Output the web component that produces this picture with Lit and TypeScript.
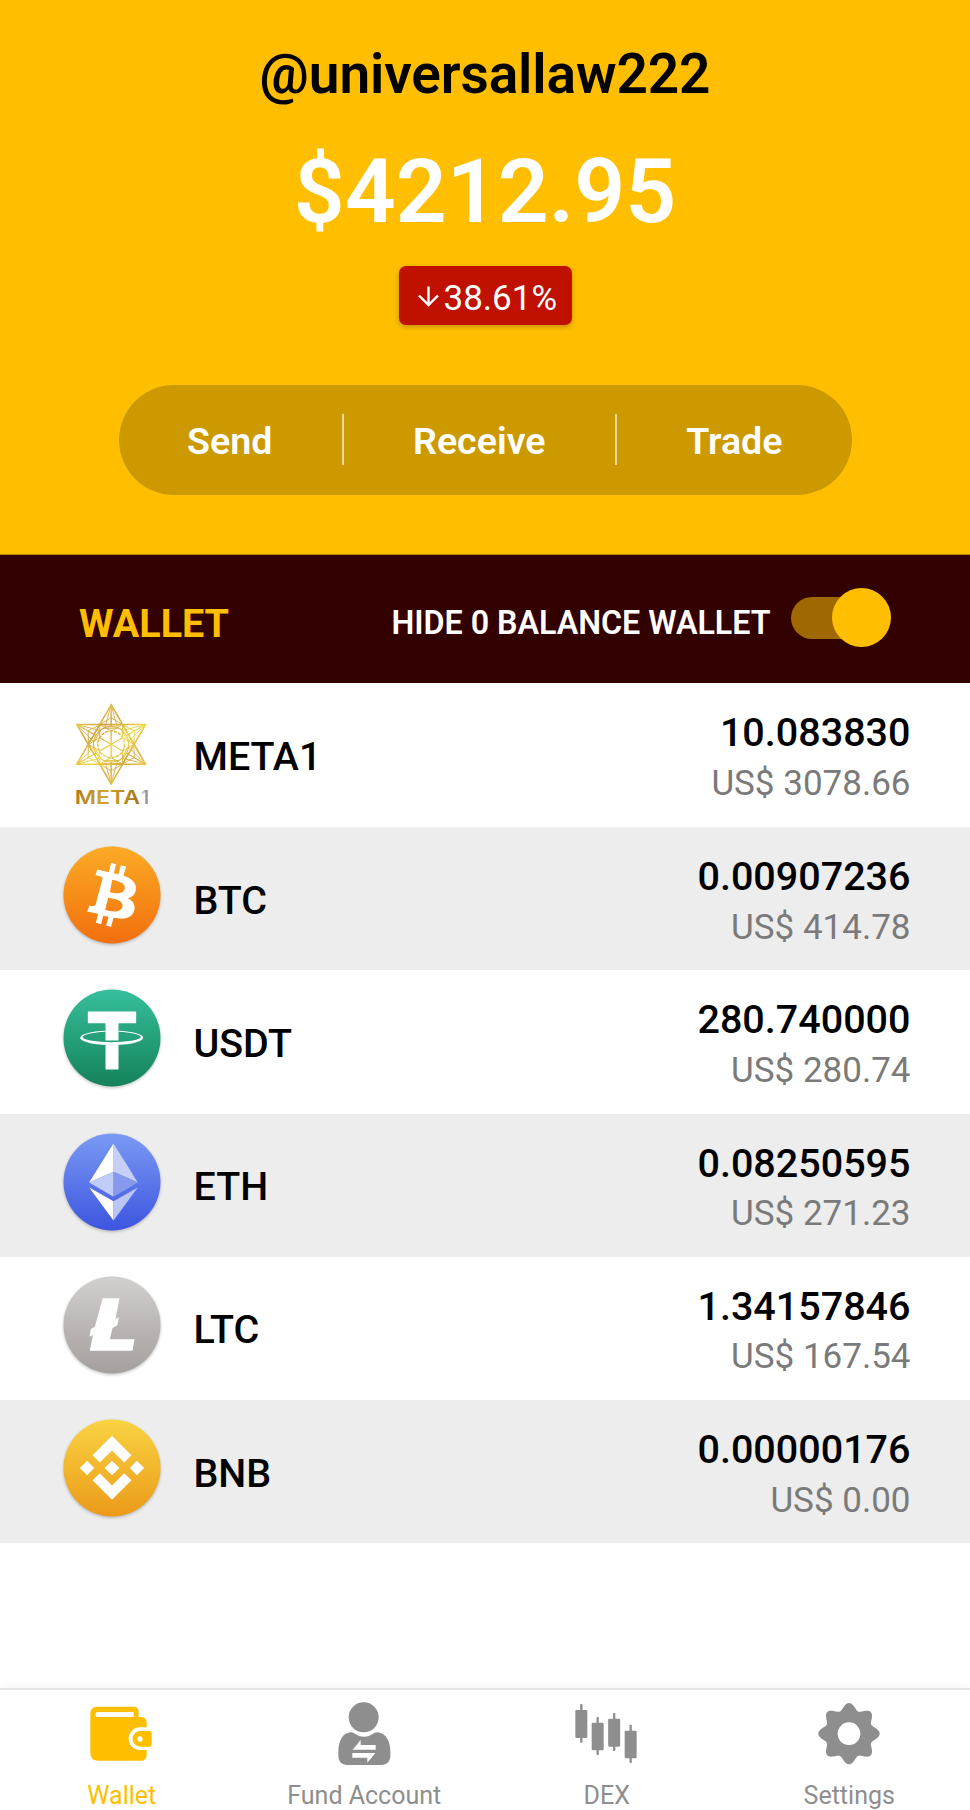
import { LitElement, html, svg, css } from "lit";
import { customElement, property, state } from "lit/decorators.js";

type Coin = { id: string; amount: string; usd: string };

const COINS: Coin[] = [
  { id: "META1", amount: "10.083830", usd: "3078.66" },
  { id: "BTC", amount: "0.00907236", usd: "414.78" },
  { id: "USDT", amount: "280.740000", usd: "280.74" },
  { id: "ETH", amount: "0.08250595", usd: "271.23" },
  { id: "LTC", amount: "1.34157846", usd: "167.54" },
  { id: "BNB", amount: "0.00000176", usd: "0.00" },
];

const GRADIENTS: Record<string, [string, string]> = {
  BTC: ["#fbab25", "#f26f0d"],
  USDT: ["#36bf9b", "#14825a"],
  ETH: ["#7b9af4", "#3c55df"],
  LTC: ["#d2d0cf", "#a59e9d"],
  BNB: ["#f9d341", "#ec9a19"],
};

const GLYPHS: Record<string, unknown> = {
  BTC: svg`<g transform="translate(-185.5 -195.5)"><path fill="#fff" fill-rule="evenodd" d="M141 119L176 127L183 99L198 103L191 130L205 133L212 106L228 110L220 138C245 146 260 160 257 180C255 195 245 203 233 205C250 213 257 228 252 243C245 266 222 270 190 264L183 291L168 288L175 261L159 258L153 283L137 279L144 252L111 245L118 227C130 230 135 230 137 222L157 147C158 141 153 139 136 136ZM186 150L179 187C205 193 222 190 224 175C226 160 205 154 186 150ZM174 204L165 240C190 248 213 247 217 230C220 212 195 207 174 204Z"/></g>`,
  USDT: svg`<g transform="translate(-184.5 -624.5)" fill="#fff"><path d="M112 545H257V580H204V632H165V580H112Z"/><path d="M165 644H204V719H165Z"/><path fill-rule="evenodd" d="M89 624A94.500 21.500 0 0 0 278 624A94.500 21.500 0 0 0 204 603V606A88 17 0 0 1 271 622A88 17 0 0 1 96 622A88 17 0 0 1 165 606V603A94.500 21.500 0 0 0 89 624Z"/></g>`,
  ETH: svg`<g transform="translate(-185.5 -214.500)"><path fill="#fff" d="M190 99L117 216L190 184Z"/><path fill="#c6cff6" d="M190 99L263 216L190 184Z"/><path fill="#c2ccf8" d="M190 184L117 216L190 259Z"/><path fill="#8699ed" d="M190 184L263 216L190 259Z"/><path fill="#fff" d="M117 231L190 272V330Z"/><path fill="#bcc6f5" d="M263 231L190 272V330Z"/></g>`,
  LTC: svg`<g transform="translate(-184.5 -645)"><path fill="#fff" d="M157 565H207L195 627L205 622L201 645L186 654L178 688H252L246 722H118L127 675L117 680L121 657L133 650L150 588Z"/></g>`,
  BNB: svg`<g transform="translate(-185.500 -234.500)"><path fill="#fff" d="M185.500 138L244 196L222 218L185.500 182L149 218L127 196ZM127 271L149 250L185.500 287L222 250L244 271L185.500 330ZM89 234.500L111 213L132 234.500L111 256ZM239 234.500L260 213L282 234.500L260 256ZM163 234.500L185.500 213L208 234.500L185.500 256Z"/></g>`,
};

@customElement("coin-icon")
class CoinIcon extends LitElement {
  @property() name = "";

  static styles = css`
    :host { display: block; width: 100px; height: 110px; }
    svg { display: block; overflow: visible; }
    .coin { filter: drop-shadow(0 4px 4px rgba(0, 0, 0, 0.24)); }
    .brand { font-family: Inter, sans-serif; font-weight: 600; font-size: 54px; }
  `;

  private meta() {
    const at = (r: number, deg: number) => {
      const a = (deg * Math.PI) / 180;
      return [r * Math.sin(a), -r * Math.cos(a)] as const;
    };
    const poly = (pts: (readonly [number, number])[]) =>
      "M" + pts.map((p) => p[0].toFixed(1) + " " + p[1].toFixed(1)).join("L") + "Z";
    const tips = [0, 60, 120, 180, 240, 300].map((d) => at(119, d));
    const inner = [30, 90, 150, 210, 270, 330].map((d) => at(68, d));
    let web = "";
    let spokes = "";
    for (let i = 0; i < 6; i++) {
      const t = tips[i];
      const left = inner[(i + 5) % 6];
      const right = inner[i];
      const a = at(52, i * 60 - 22);
      const b = at(52, i * 60 + 22);
      const c = at(80, i * 60);
      web += poly([t, a, b]) + poly([left, c, right]) + poly([left, at(40, i * 60), right]);
      web += poly([t, at(52, i * 60)]);
      spokes += poly([[0, 0], at(38, i * 60)]);
    }
    return svg`
      <defs>
        <linearGradient id="gold" gradientUnits="userSpaceOnUse" x1="-80" y1="-110" x2="70" y2="110">
          <stop offset="0" stop-color="#f0d955"/><stop offset=".3" stop-color="#d3a23c"/>
          <stop offset=".55" stop-color="#f0d846"/><stop offset=".75" stop-color="#d6aa3a"/>
          <stop offset="1" stop-color="#ecd550"/>
        </linearGradient>
        <linearGradient id="word" gradientUnits="userSpaceOnUse" x1="-109" y1="0" x2="85" y2="20">
          <stop offset="0" stop-color="#a8741c"/><stop offset=".5" stop-color="#d2a62e"/>
          <stop offset="1" stop-color="#a97a1e"/>
        </linearGradient>
        <linearGradient id="one" x1="0" y1="0" x2="1" y2="0">
          <stop offset="0" stop-color="#d0d0d0"/><stop offset="1" stop-color="#77777c"/>
        </linearGradient>
      </defs>
      <g fill="none" stroke="url(#gold)" transform="translate(-2.500 -20)">
        <path stroke-width="4.500" d="${poly([tips[0], tips[2], tips[4]])}${poly([tips[1], tips[3], tips[5]])}"/>
        <path stroke-width="2.800" d="${web}"/>
        <path stroke-width="3" d="${spokes}"/>
        <circle r="53" stroke-width="3.500"/><circle r="40" stroke-width="4.500" stroke-dasharray="10 3"/>
      </g>
      <text class="brand" x="-112" y="160" textLength="196" lengthAdjust="spacingAndGlyphs" fill="url(#word)">META</text>
      <text class="brand" x="88" y="160" fill="url(#one)">1</text>`;
  }

  render() {
    if (this.name === "META1") {
      return html`<svg width="100" height="110" viewBox="-150 -150 300 330">${this.meta()}</svg>`;
    }
    const [top, bottom] = GRADIENTS[this.name];
    return html`<svg width="100" height="110" viewBox="-150 -150 300 330">
      <defs>
        <linearGradient id="face" x1="0" y1="0" x2="0" y2="1">
          <stop offset="0" stop-color=${top} /><stop offset="1" stop-color=${bottom} />
        </linearGradient>
      </defs>
      <circle class="coin" r="145.500" fill="url(#face)"/>
      ${GLYPHS[this.name]}
    </svg>`;
  }
}

const gearPath = () => {
  let d = "";
  for (let i = 0; i < 180; i++) {
    const a = (i * Math.PI) / 90;
    const r = 82 + 10 * Math.cos(8 * a);
    d += (i ? "L" : "M") + (896 + r * Math.sin(a)).toFixed(1) + " " + (161 - r * Math.cos(a)).toFixed(1);
  }
  return d + "ZM862 161a34 34 0 1 0 68 0a34 34 0 1 0 -68 0Z";
};

const NAV = [
  {
    label: "Wallet",
    box: "85 60 198 198",
    art: svg`<path fill-rule="evenodd" d="M112 80H222Q237 80 237 95V111H243Q261 111 261 129V142H241A34 34 0 0 0 241 210H261V224Q261 242 243 242H114Q92 242 92 220V102Q92 80 112 80ZM115 96Q107 96 107 103.500Q107 111 115 111H222V96Z"/><path fill-rule="evenodd" d="M242 153H271Q276 153 276 158V195Q276 200 271 200H242A23.500 23.500 0 0 1 242 153ZM233 177a8 8 0 1 0 16 0a8 8 0 1 0 -16 0Z"/>`,
  },
  {
    label: "Fund Account",
    box: "812 60 198 198",
    art: svg`<circle cx="910" cy="112" r="45"/><path fill-rule="evenodd" d="M834 215C834 182 848 158 872 157C878 157 881 159 886 163C901 173 921 173 936 163C941 159 945 157 952 157C977 160 990 184 990 215V226C990 245 980 255 962 255H862C843 255 834 245 834 226ZM877 209H946V195H901V180ZM876 219H945L921 248V233H876Z"/>`,
  },
  {
    label: "DEX",
    box: "70 60 198 198",
    art: svg`<rect x="77" y="90" width="36" height="84" rx="4"/><rect x="91.500" y="72" width="7" height="116" rx="2"/><rect x="126" y="128" width="36" height="83" rx="4"/><rect x="140.500" y="111" width="7" height="114" rx="2"/><rect x="175.500" y="116" width="36" height="84" rx="4"/><rect x="190" y="99" width="7" height="114" rx="2"/><rect x="225" y="152" width="36" height="83" rx="4"/><rect x="239.500" y="134" width="7" height="115" rx="2"/>`,
  },
  { label: "Settings", box: "797 60 198 198", art: svg`<path fill-rule="evenodd" d="${gearPath()}"/>` },
];

@customElement("app-root")
class AppRoot extends LitElement {
  @state() private hideEmpty = true;
  @state() private tab = "Wallet";

  static styles = css`
    :host {
      display: flex; flex-direction: column; height: 1810px; box-sizing: border-box;
      background: #fff; font-family: Roboto, sans-serif; overflow: hidden; color: #000;
    }
    .hero {
      display: flex; flex-direction: column; align-items: center; box-sizing: border-box;
      height: 554px; padding-top: 42px; background: #ffbf00; flex: none;
    }
    .user { font-size: 55px; line-height: 64px; font-weight: 600; letter-spacing: -0.1px; }
    .total { margin-top: 34px; font-size: 89.3px; line-height: 104px; font-weight: 600; color: #fff; }
    .change {
      display: flex; align-items: center; box-sizing: border-box; margin-top: 22.4px; width: 173px; height: 59px;
      padding: 5px 0 0 19.500px; border-radius: 7px; background: #c01000; color: #fff; font-size: 35px;
      box-shadow: 0 2px 5px rgba(60, 30, 0, 0.3);
    }
    .change svg { margin: 0 4.500px 4px 0; }
    .actions {
      display: flex; align-items: center; justify-content: space-between; box-sizing: border-box;
      width: 733px; height: 110.5px; margin-top: 59.300px; padding: 0 69px 0 68.500px; border-radius: 56px;
      background: #cc9900; color: #fff; font-size: 37.6px; font-weight: 600;
    }
    .actions span { padding-top: 3px; }
    .rule { width: 2px; height: 51px; background: rgba(255, 255, 255, 0.6); }
    .bar {
      display: flex; align-items: center; box-sizing: border-box; height: 129px; flex: none;
      padding: 0 78.500px 0 79px; background: #330000; border-top: 1px solid #b38300;
    }
    .title { font-size: 39.5px; font-weight: 700; color: #ffbf00; padding-top: 8px; flex: 1; }
    .hint { font-size: 32.3px; font-weight: 600; letter-spacing: -0.05px; color: #fff; padding-top: 8px; }
    .toggle { display: flex; align-items: center; width: 101px; height: 42px; margin: 0 0 3px 20px; }
    .track { display: flex; align-items: center; width: 85px; height: 42px; border-radius: 21px; background: #a06800; }
    .thumb { flex: none; width: 59.500px; height: 59.500px; margin-left: 41px; border-radius: 50%; background: #ffbf00; }
    .list { display: grid; grid-template-rows: 144px repeat(5, 143.25px); flex: none; }
    .row { display: grid; grid-template-columns: 100px 1fr auto; column-gap: 31.5px; padding: 0 59.5px 0 62px; }
    .row:nth-child(even) { background: #ededed; }
    .icon { padding-top: 18px; }
    .symbol { padding-top: 49.700px; font-size: 39.4px; line-height: 47px; font-weight: 500; }
    .figures { text-align: right; padding-top: 27px; }
    .amount { font-size: 39.5px; line-height: 46px; font-weight: 500; }
    .usd { font-size: 35px; line-height: 41px; color: #7a7a7a; padding-top: 6.500px; }
    .nav {
      display: grid; grid-template-columns: repeat(4, 1fr); height: 122px; box-sizing: border-box; margin-top: auto;
      border-top: 2px solid #e6e6e6; box-shadow: 0 -2px 6px rgba(0, 0, 0, 0.04); flex: none;
    }
    .tab { display: flex; flex-direction: column; align-items: center; padding-top: 10px; color: #8e8e8e; fill: currentColor; }
    .tab.active { color: #ffbf00; }
    .label { margin-top: 14.500px; padding-left: 1px; font-size: 25px; line-height: 30px; }
  `;

  render() {
    return html`
      <section class="hero">
        <div class="user">@universallaw222</div>
        <div class="total">$4212.95</div>
        <div class="change">
          <svg width="21" height="21" viewBox="0 0 21 21" fill="none" stroke="#fff" stroke-width="2.400">
            <path d="M10.500 .5V19M1 9.500L10.500 19L20 9.500" />
          </svg>
          <span>38.61%</span>
        </div>
        <div class="actions">
          <span>Send</span><i class="rule"></i><span>Receive</span><i class="rule"></i><span>Trade</span>
        </div>
      </section>
      <section class="bar">
        <div class="title">WALLET</div>
        <div class="hint">HIDE 0 BALANCE WALLET</div>
        <div class="toggle" @click=${() => (this.hideEmpty = !this.hideEmpty)}>
          <div class="track"><div class="thumb"></div></div>
        </div>
      </section>
      <section class="list">
        ${COINS.map(
          (c) => html`<div class="row">
            <div class="icon"><coin-icon name=${c.id}></coin-icon></div>
            <div class="symbol">${c.id}</div>
            <div class="figures">
              <div class="amount">${c.amount}</div>
              <div class="usd">US$ ${c.usd}</div>
            </div>
          </div>`
        )}
      </section>
      <nav class="nav">
        ${NAV.map(
          (n) => html`<div class="tab ${n.label === this.tab ? "active" : ""}" @click=${() => (this.tab = n.label)}>
            <svg width="66" height="66" viewBox=${n.box}>${n.art}</svg>
            <div class="label">${n.label}</div>
          </div>`
        )}
      </nav>
    `;
  }
}
